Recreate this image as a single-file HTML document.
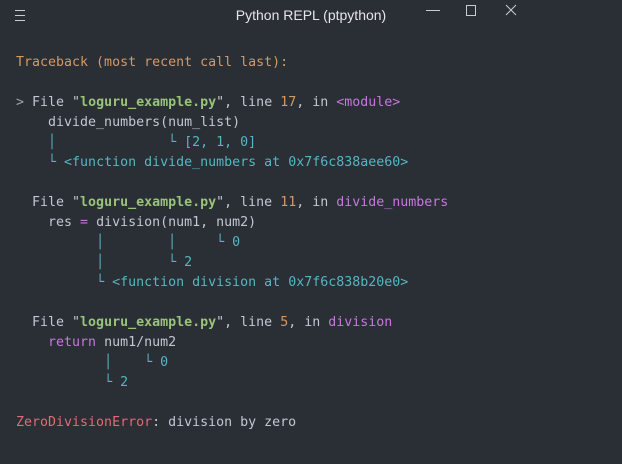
<!DOCTYPE html>
<html><head><meta charset="utf-8"><style>
html,body{margin:0;padding:0;background:#2a2e35;width:622px;height:464px;overflow:hidden}
.title{position:absolute;left:0;top:0;width:622px;height:32px;text-align:center;font:14px "Liberation Sans",sans-serif;color:#e4e6ea;line-height:31px}
pre{position:absolute;left:16px;top:53px;margin:0;font:13.3px/20px "DejaVu Sans Mono","Liberation Mono",monospace;color:#c3c7cf;white-space:pre}
.o{color:#d39a66}.g{color:#98c379;font-weight:bold}.p{color:#c678dd}.c{color:#56b6c2}.r{color:#e06c75}.d{color:#9da3ad}
</style></head><body>
<div class="title">Python REPL (ptpython)</div>
<svg style="position:absolute;left:0;top:0" width="622" height="32">
<g stroke="#c8ccd2" stroke-width="1" fill="none">
<path d="M15 10.5h10M15 15.5h10M15 20.5h10"/>
<path d="M426 10.5h14"/>
<rect x="466.5" y="5.5" width="9" height="10"/>
<path d="M506 5l10 10M516 5l-10 10"/>
</g></svg>
<pre><span class="o">Traceback (most recent call last):</span>

<span class="d">&gt;</span> File "<span class="g">loguru_example.py</span>", line <span class="o">17</span>, in <span class="p">&lt;module&gt;</span>
    divide_numbers(num_list)
    <span class="c">│              └ [2, 1, 0]</span>
    <span class="c">└ &lt;function divide_numbers at 0x7f6c838aee60&gt;</span>

  File "<span class="g">loguru_example.py</span>", line <span class="o">11</span>, in <span class="p">divide_numbers</span>
    res <span class="p">=</span> division(num1, num2)
          <span class="c">│        │     └ 0</span>
          <span class="c">│        └ 2</span>
          <span class="c">└ &lt;function division at 0x7f6c838b20e0&gt;</span>

  File "<span class="g">loguru_example.py</span>", line <span class="o">5</span>, in <span class="p">division</span>
    <span class="p">return</span> num1/num2
           <span class="c">│    └ 0</span>
           <span class="c">└ 2</span>

<span class="r">ZeroDivisionError</span>: division by zero</pre>
</body></html>
